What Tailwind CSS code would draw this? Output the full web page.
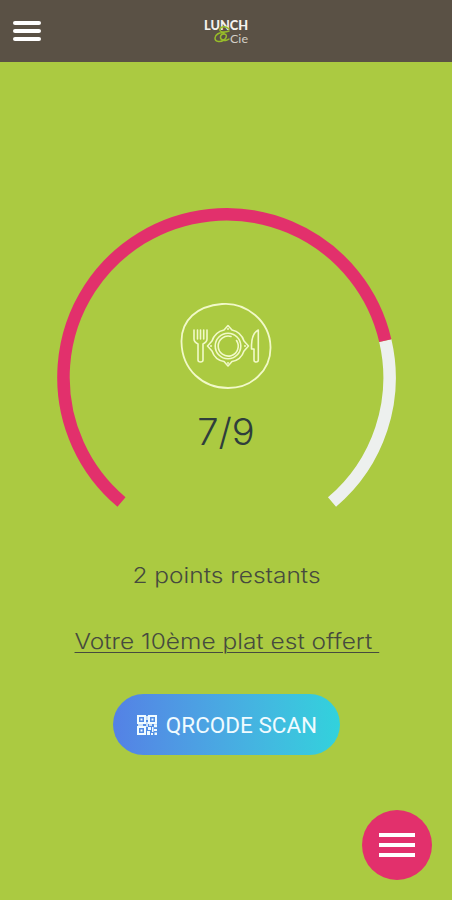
<!DOCTYPE html>
<html lang="fr">
<head>
  <meta charset="UTF-8">
  <meta name="viewport" content="width=device-width, initial-scale=1.0">
  <title>Lunch &amp; Cie</title>
  <script src="https://cdn.jsdelivr.net/npm/@tailwindcss/browser@4"></script>
</head>
<body class="bg-[#abca41] h-screen overflow-hidden font-['Inter',sans-serif] text-[#464b3e]">
  <header class="h-[62px] bg-[#5a5145] flex items-center px-[13px]">
    <button class="flex flex-col gap-1" aria-label="Menu">
      <span class="block w-7 h-1 rounded-xs bg-white"></span>
      <span class="block w-7 h-1 rounded-xs bg-white"></span>
      <span class="block w-7 h-1 rounded-xs bg-white"></span>
    </button>
    <svg class="ml-[159px]" width="52" height="30" viewBox="0 0 52 30">
      <text x="4" y="14" font-family="Lato, sans-serif" font-weight="900" font-size="13" textLength="44" lengthAdjust="spacingAndGlyphs" fill="#f4f2ed">LUNCH</text>
      <!-- ampersand -->
      <path d="M29 13C26 10 21 10 20 13C19 16 24 17 29 15M24 17C19 16 15 19 15 22C15 26 21 27 25 23C27 21 27 18 24 18C20 18 19 23 23 24C25 25 28 24 29 23" fill="none" stroke="#98bd29" stroke-width="1.5" stroke-linecap="round"/>
      <text x="30" y="26.5" font-family="Lato, sans-serif" font-size="11.5" textLength="18" lengthAdjust="spacingAndGlyphs" fill="#d3cfc7">Cie</text>
    </svg>
  </header>

  <main class="flex flex-col items-center pt-[138px]">
    <div class="relative w-[352px] h-[320px]">
      <!-- points gauge -->
      <svg class="block" width="352" height="320" viewBox="50 200 352 320" fill="none">
        <path d="M385.3 340.7A163 163 0 0 1 332 502" stroke="#edf0ee" stroke-width="12.5"/>
        <path d="M121.5 502A163 163 0 1 1 385.3 340.7" stroke="#e2306c" stroke-width="12.5"/>
        <!-- plate, fork and knife -->
        <g stroke="#f1f9c8" stroke-width="1.8" stroke-linecap="round" stroke-linejoin="round">
          <path d="M222 304C246 302 270 321 270.5 347C271 371 251 388 228 388C203 388 182 370 181.5 342C181 320 197 306 222 304Z"/>
          <g stroke-width="1.6">
            <path d="M194 330V339Q194 342 198 344V360Q198 362 200.5 362Q203 362 203 360V344Q207 342 207 339V330M197.5 330V339M200.5 330V339M203.7 330V339"/>
            <path d="M228 325.5L232 330Q241 332 244 341L248.5 346L244 351Q241 360 232 361.5L228 366L224 361.5Q215 360 212 351L207.5 346L212 341Q215 332 224 330Z"/>
            <circle cx="228" cy="346" r="12.8"/>
            <path d="M236.5 340.5A10 10 0 1 1 231 336.5"/>
            <path d="M258.3 330Q252 333 251.5 345V349H254V360Q254 362 256.2 362Q258.3 362 258.3 360Z"/>
          </g>
          <g fill="#f1f9c8" stroke="none">
            <circle cx="228" cy="329" r="1"/>
            <circle cx="228" cy="363" r="1"/>
            <circle cx="211" cy="346" r="1"/>
            <circle cx="245" cy="346" r="1"/>
          </g>
        </g>
      </svg>
      <p class="absolute inset-x-0 top-[208px] text-center text-[37px] leading-[48px] font-light text-[#2f3e3c] scale-x-[1.03]">7/9</p>
    </div>

    <p class="mt-[41px] ml-px text-[22px] leading-7 font-light scale-x-[1.113]">2 points restants</p>
    <p class="mt-[38px] ml-px text-[22px] leading-7 font-light underline decoration-1 underline-offset-[3px] whitespace-pre scale-x-[1.113]">Votre 10ème plat est offert </p>

    <button class="mt-[39px] w-[227px] h-[61px] rounded-full bg-linear-to-r from-[#5481e5] to-[#31d2dc] flex items-center justify-center gap-[9px] pl-0.5 text-[#f0fbff] font-['Roboto',sans-serif]">
      <svg width="20" height="20" viewBox="0 0 20 20" fill="none" stroke="currentColor" stroke-width="2">
        <path d="M1 1H8V8H1ZM12 1H19V8H12ZM1 12H8V19H1Z"/>
        <path fill="currentColor" stroke="none" d="M3.5 3.5h2v2h-2zM14.5 3.5h2v2h-2zM3.5 14.5h2v2h-2zM9.3 1h1.5v4H9.3zM9.3 7h1.5v5H9.3zM1 9.3h5v1.5H1zM12 9.3h3v1.5h-3zM17 9.3h3v3h-3zM11 12h3v3h-3zM15 12h1.5v5H15zM10 16h3v4h-3zM17 14h3v2h-3zM14 18h2v2h-2zM17.5 17.5H20V20h-2.5z"/>
      </svg>
      <span class="text-[22.5px] leading-7">QRCODE SCAN</span>
    </button>
  </main>

  <button class="fixed right-5 bottom-5 size-[70px] rounded-full bg-[#e2306c] flex flex-col items-center justify-center gap-[6px]" aria-label="Actions">
    <span class="block w-9 h-1 bg-white"></span>
    <span class="block w-9 h-1 bg-white"></span>
    <span class="block w-9 h-1 bg-white"></span>
  </button>
</body>
</html>
